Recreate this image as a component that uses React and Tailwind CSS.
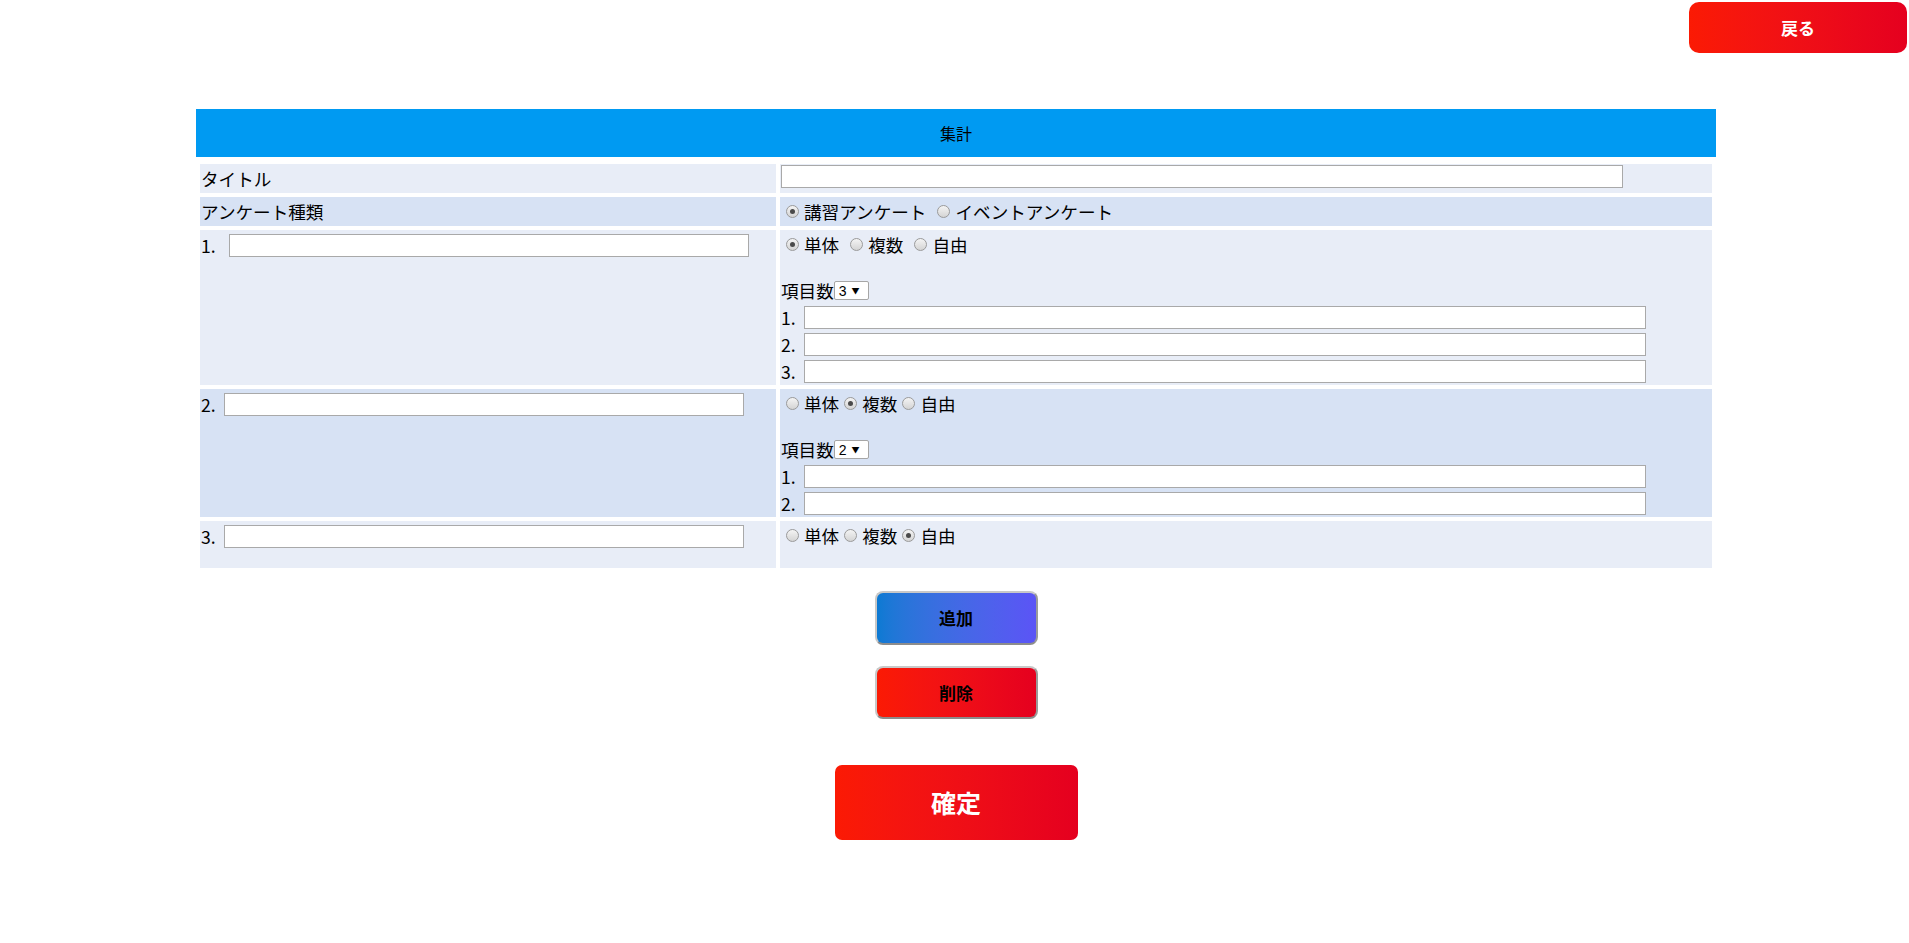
import React from "react";

const Radio = ({ checked }) => (
  <span className="inline-flex items-center justify-center w-[13px] h-[13px] rounded-full border border-[#9a9a9a] bg-linear-to-b from-[#f4f4f4] to-[#d4d4d4] ml-[5px] mr-[5px] shrink-0">
    {checked ? <span className="block w-[5px] h-[5px] rounded-full bg-[#4a4a4a]" /> : null}
  </span>
);

const TextBox = ({ w }) => (
  <div className={`h-[23px] bg-white border border-[#a9a9a9] ${w}`} />
);

const Select = ({ value }) => (
  <div className="w-[35px] h-[19px] bg-white border border-[#a6a6a6] rounded-[2px] flex items-center pl-[4px] gap-[5px]">
    <span className="text-[14px] leading-none font-['Liberation_Sans',sans-serif]">{value}</span>
    <span className="text-[8px] leading-none">▼</span>
  </div>
);

const RadioGroup = ({ items, checkedIndex, spaced }) => (
  <div className="h-[29px] flex items-center">
    {items.map((t, i) => (
      <div key={t} className={`flex items-center ${i > 0 && spaced ? "ml-[6px]" : ""}`}>
        <Radio checked={i === checkedIndex} />
        <span>{t}</span>
      </div>
    ))}
  </div>
);

const QRight = ({ checkedIndex, spaced, count }) => (
  <div className="pl-[1px] flex flex-col">
    <RadioGroup items={["単体", "複数", "自由"]} checkedIndex={checkedIndex} spaced={spaced} />
    {count > 0 ? (
      <>
        <div className="mt-[22px] h-[19px] flex items-center">
          <span>項目数</span>
          <Select value={String(count)} />
        </div>
        <div className="mt-[6px] flex flex-col gap-[4px]">
          {Array.from({ length: count }).map((_, i) => (
            <div key={i} className="flex items-center h-[23px]">
              <span className="w-[23px]">{i + 1}.</span>
              <TextBox w="w-[842px]" />
            </div>
          ))}
        </div>
      </>
    ) : null}
  </div>
);

const QLeft = ({ n, labelW }) => (
  <div className="pl-[1px] pt-[4px] flex items-start">
    <div className="flex items-center h-[23px]">
      <span className={labelW}>{n}.</span>
      <TextBox w="w-[520px]" />
    </div>
  </div>
);

export default function App() {
  const light = "bg-[#e8edf7]";
  const dark = "bg-[#d7e2f4]";
  return (
    <div className="w-[1909px] min-h-[943px] bg-white text-black font-['Noto_Sans_CJK_JP','Noto_Sans',sans-serif]">
      <div className="flex justify-end pt-[2px] pr-[2px]">
        <button className="w-[218px] h-[51px] rounded-[10px] bg-linear-to-r from-[#fb1a04] to-[#e5001f] text-white font-bold text-[17px]">
          戻る
        </button>
      </div>

      <div className="ml-[196px] w-[1520px] mt-[56px]">
        <div className="h-[48px] bg-[#009af2] flex items-center justify-center text-[16px]">
          集計
        </div>

        <div className="mt-[7px] pl-[4px] grid grid-cols-[576px_932px] grid-rows-[29px_29px_155px_128px_47px] gap-[4px] text-[17.6px] leading-[29px]">
          <div className={`${light} pl-[1px]`}>タイトル</div>
          <div className={`${light} pl-[1px] pt-[1px]`}>
            <TextBox w="w-[842px]" />
          </div>

          <div className={`${dark} pl-[1px]`}>アンケート種類</div>
          <div className={`${dark} pl-[1px]`}>
            <RadioGroup items={["講習アンケート", "イベントアンケート"]} checkedIndex={0} spaced />
          </div>

          <div className={light}>
            <QLeft n={1} labelW="w-[28px]" />
          </div>
          <div className={light}>
            <QRight checkedIndex={0} spaced count={3} />
          </div>

          <div className={dark}>
            <QLeft n={2} labelW="w-[23px]" />
          </div>
          <div className={dark}>
            <QRight checkedIndex={1} spaced={false} count={2} />
          </div>

          <div className={light}>
            <QLeft n={3} labelW="w-[23px]" />
          </div>
          <div className={light}>
            <QRight checkedIndex={2} spaced={false} count={0} />
          </div>
        </div>

        <div className="flex flex-col items-center">
          <button className="mt-[23px] w-[163px] h-[54px] rounded-[8px] border-2 border-[#c8c8c8] border-b-[#8c8c8c] border-r-[#9a9a9a] bg-linear-to-r from-[#0b7ad3] to-[#5b54f6] font-bold text-[17px] text-black">
            追加
          </button>
          <button className="mt-[21px] w-[163px] h-[53px] rounded-[8px] border-2 border-[#c8c8c8] border-b-[#8c8c8c] border-r-[#9a9a9a] bg-linear-to-r from-[#fb1a04] to-[#e5001f] font-bold text-[17px] text-black">
            削除
          </button>
          <button className="mt-[46px] w-[243px] h-[75px] rounded-[7px] bg-linear-to-r from-[#fb1a04] to-[#e5001f] font-bold text-[25px] text-white">
            確定
          </button>
        </div>
      </div>
    </div>
  );
}
